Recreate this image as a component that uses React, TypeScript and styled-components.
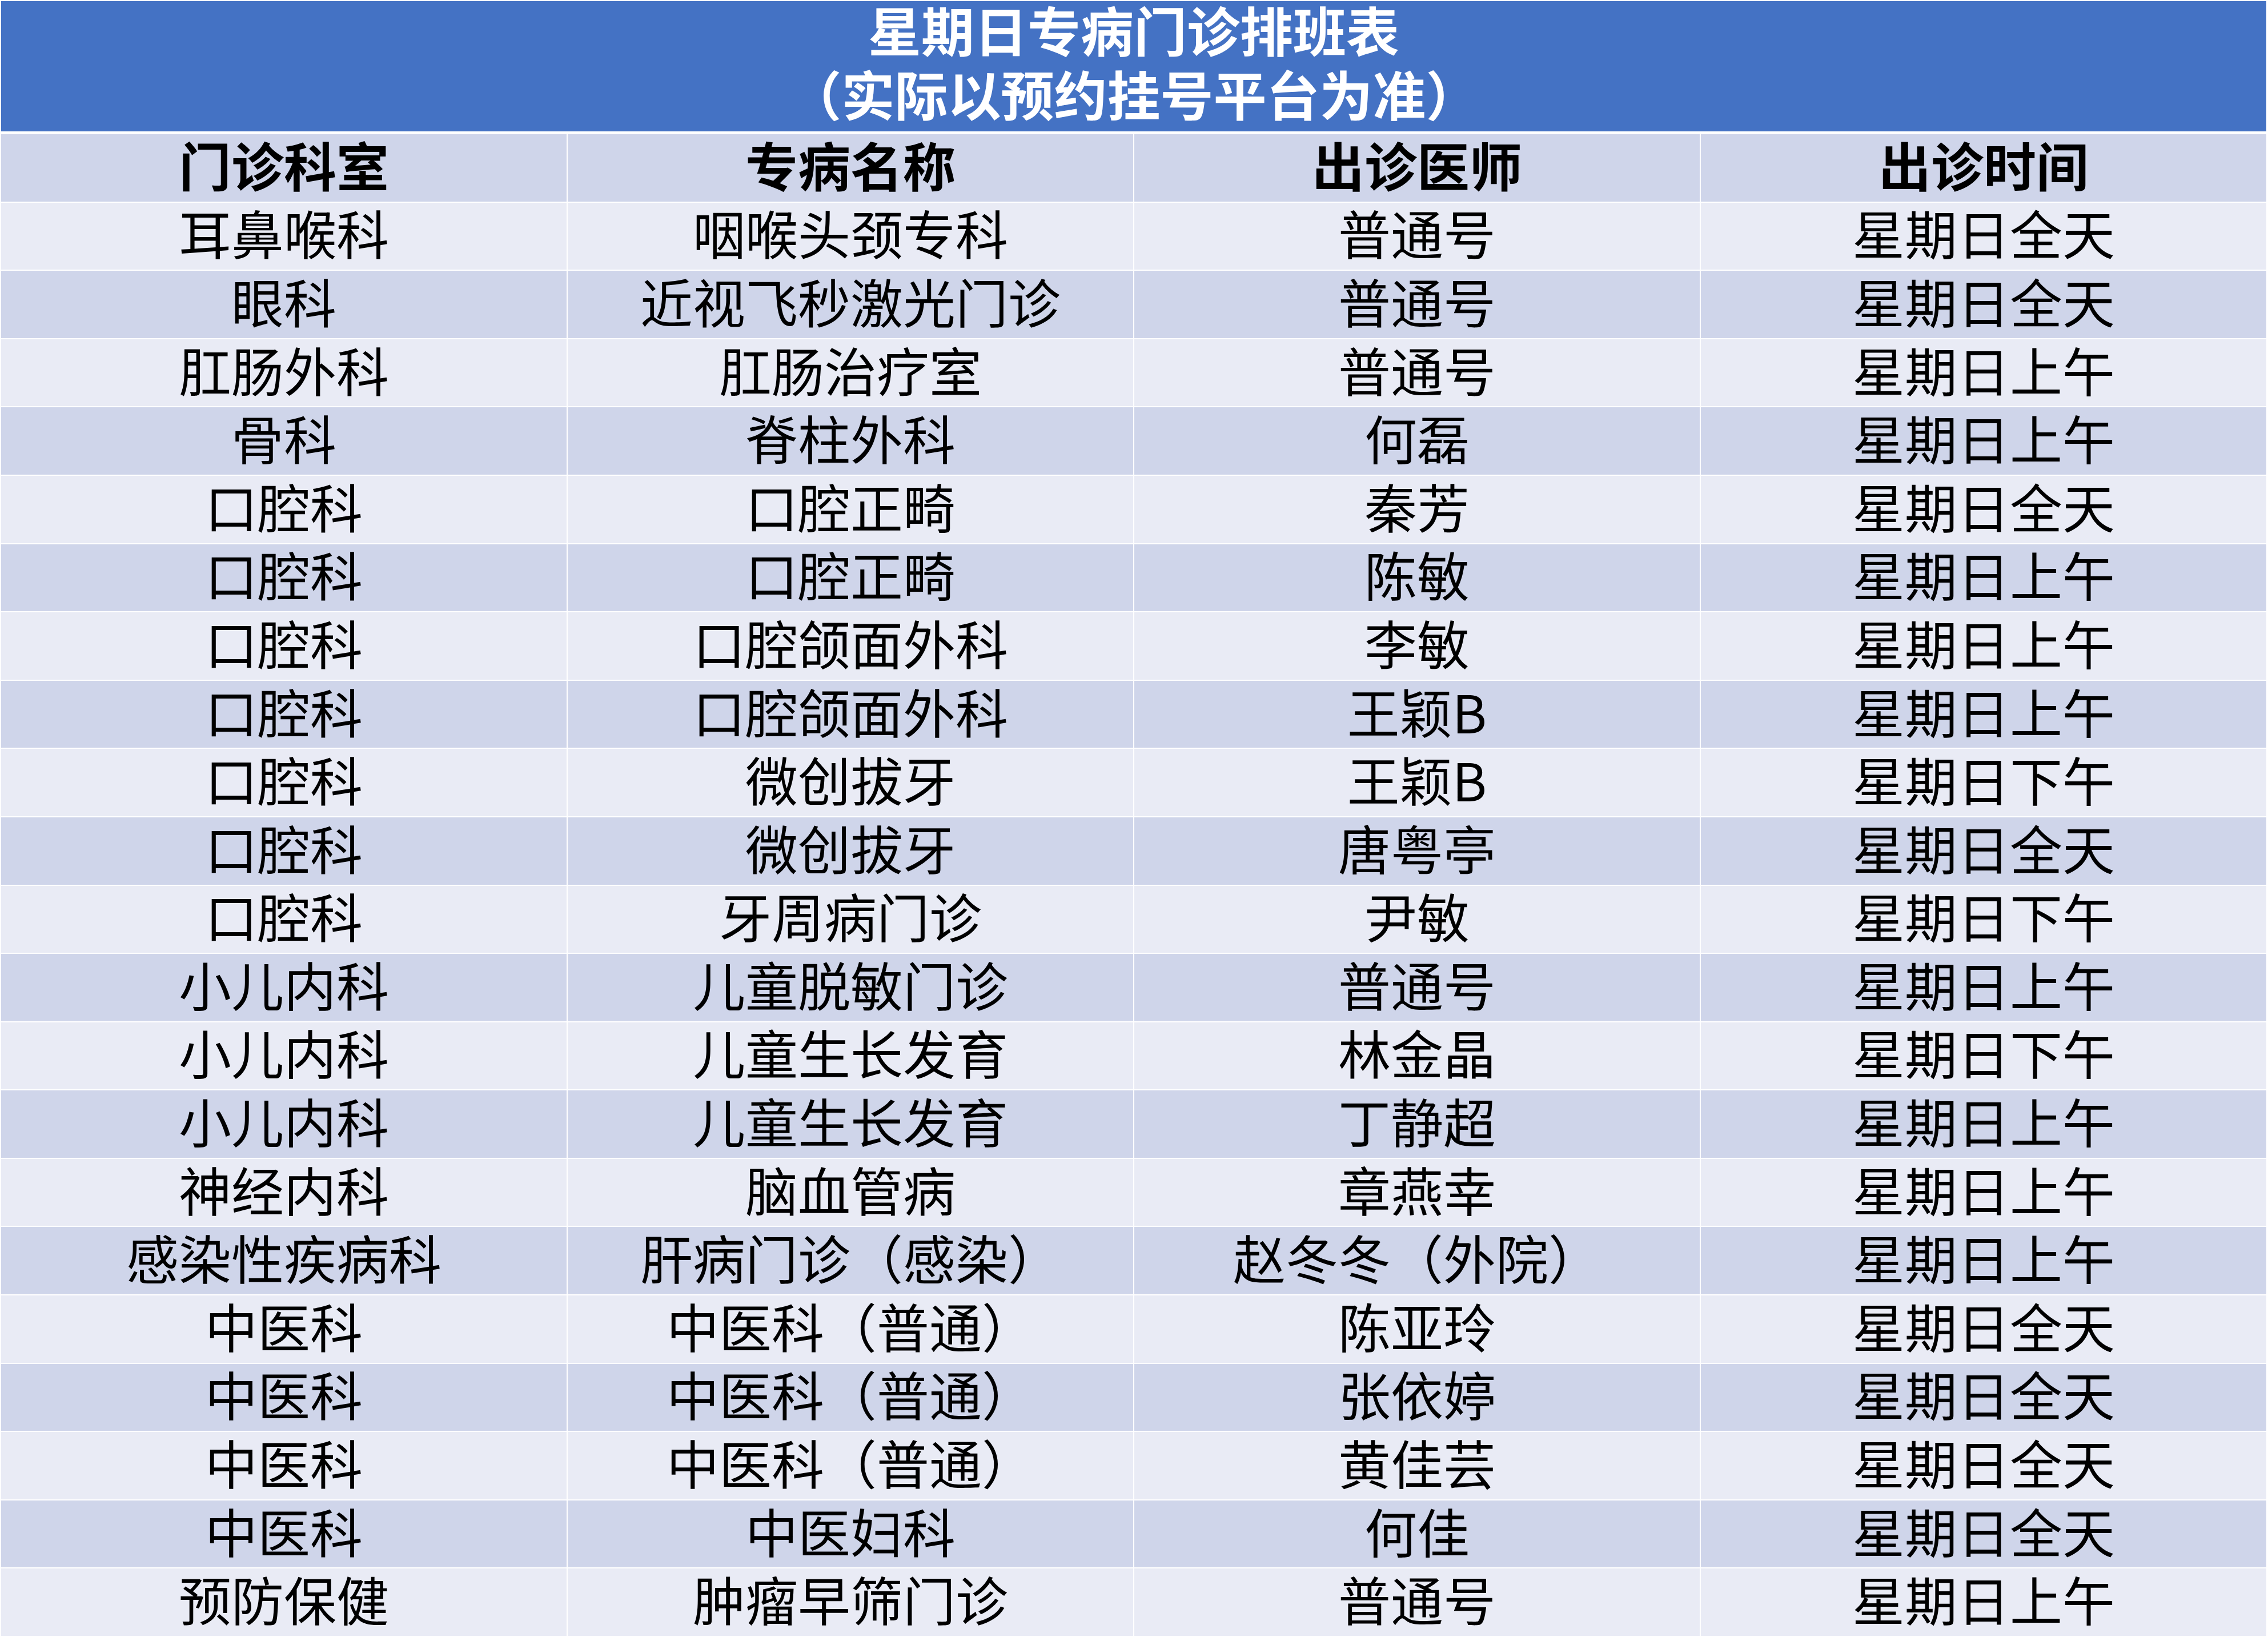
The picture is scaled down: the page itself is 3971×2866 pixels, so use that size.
import React from "react";
import styled, { createGlobalStyle } from "styled-components";

const Global = createGlobalStyle`
  html, body { margin: 0; padding: 0; background: #ffffff; }
  body { font-family: "Noto Sans CJK SC", "Noto Sans", sans-serif; }
`;

const Page = styled.div`
  width: 3971px;
  height: 2866px;
  box-sizing: border-box;
  padding: 2px 3px 2px 2px;
  display: flex;
  flex-direction: column;
  background: #ffffff;
`;

const TitleBar = styled.div`
  height: 228px;
  flex: none;
  box-sizing: border-box;
  padding-bottom: 18px;
  background: #4472c4;
  color: #ffffff;
  display: flex;
  flex-direction: column;
  align-items: center;
  justify-content: center;
  font-size: 93px;
  font-weight: 700;
  line-height: 112px;
  margin-bottom: 5px;
`;

const TitleLine = styled.div`
  white-space: nowrap;
`;

const Grid = styled.div`
  flex: 1;
  display: grid;
  grid-template-columns: repeat(4, 1fr);
  grid-auto-rows: 1fr;
  gap: 2px;
`;

const Cell = styled.div<{ $band: "dark" | "light"; $head?: boolean }>`
  background: ${(p) => (p.$band === "dark" ? "#cfd5ea" : "#e9ebf5")};
  display: flex;
  align-items: center;
  justify-content: center;
  box-sizing: border-box;
  padding-bottom: 14px;
  font-size: 92px;
  font-weight: ${(p) => (p.$head ? 700 : 400)};
  color: #000000;
  white-space: nowrap;
  line-height: 1;
`;

const headers = ["门诊科室", "专病名称", "出诊医师", "出诊时间"];

const rows: string[][] = [
  ["耳鼻喉科", "咽喉头颈专科", "普通号", "星期日全天"],
  ["眼科", "近视飞秒激光门诊", "普通号", "星期日全天"],
  ["肛肠外科", "肛肠治疗室", "普通号", "星期日上午"],
  ["骨科", "脊柱外科", "何磊", "星期日上午"],
  ["口腔科", "口腔正畸", "秦芳", "星期日全天"],
  ["口腔科", "口腔正畸", "陈敏", "星期日上午"],
  ["口腔科", "口腔颌面外科", "李敏", "星期日上午"],
  ["口腔科", "口腔颌面外科", "王颖B", "星期日上午"],
  ["口腔科", "微创拔牙", "王颖B", "星期日下午"],
  ["口腔科", "微创拔牙", "唐粤亭", "星期日全天"],
  ["口腔科", "牙周病门诊", "尹敏", "星期日下午"],
  ["小儿内科", "儿童脱敏门诊", "普通号", "星期日上午"],
  ["小儿内科", "儿童生长发育", "林金晶", "星期日下午"],
  ["小儿内科", "儿童生长发育", "丁静超", "星期日上午"],
  ["神经内科", "脑血管病", "章燕幸", "星期日上午"],
  ["感染性疾病科", "肝病门诊（感染）", "赵冬冬（外院）", "星期日上午"],
  ["中医科", "中医科（普通）", "陈亚玲", "星期日全天"],
  ["中医科", "中医科（普通）", "张依婷", "星期日全天"],
  ["中医科", "中医科（普通）", "黄佳芸", "星期日全天"],
  ["中医科", "中医妇科", "何佳", "星期日全天"],
  ["预防保健", "肿瘤早筛门诊", "普通号", "星期日上午"],
];

export default function App() {
  return (
    <>
      <Global />
      <Page>
        <TitleBar>
          <TitleLine>星期日专病门诊排班表</TitleLine>
          <TitleLine>（实际以预约挂号平台为准）</TitleLine>
        </TitleBar>
        <Grid>
          {headers.map((h) => (
            <Cell key={h} $band="dark" $head>
              {h}
            </Cell>
          ))}
          {rows.map((r, i) =>
            r.map((c, j) => (
              <Cell key={`${i}-${j}`} $band={i % 2 === 0 ? "light" : "dark"}>
                {c}
              </Cell>
            ))
          )}
        </Grid>
      </Page>
    </>
  );
}
